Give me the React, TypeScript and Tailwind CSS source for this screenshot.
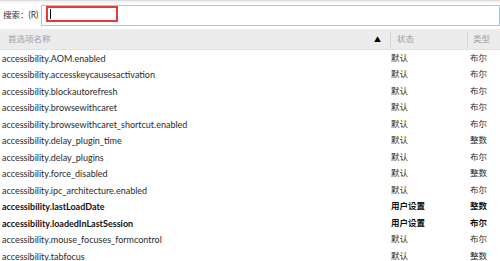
import React from "react";

type Pref = { name: string; status: string; type: string; bold?: boolean };

const rows: Pref[] = [
  { name: "accessibility.AOM.enabled", status: "默认", type: "布尔" },
  { name: "accessibility.accesskeycausesactivation", status: "默认", type: "布尔" },
  { name: "accessibility.blockautorefresh", status: "默认", type: "布尔" },
  { name: "accessibility.browsewithcaret", status: "默认", type: "布尔" },
  { name: "accessibility.browsewithcaret_shortcut.enabled", status: "默认", type: "布尔" },
  { name: "accessibility.delay_plugin_time", status: "默认", type: "整数" },
  { name: "accessibility.delay_plugins", status: "默认", type: "布尔" },
  { name: "accessibility.force_disabled", status: "默认", type: "整数" },
  { name: "accessibility.ipc_architecture.enabled", status: "默认", type: "布尔" },
  { name: "accessibility.lastLoadDate", status: "用户设置", type: "整数", bold: true },
  { name: "accessibility.loadedInLastSession", status: "用户设置", type: "布尔", bold: true },
  { name: "accessibility.mouse_focuses_formcontrol", status: "默认", type: "布尔" },
  { name: "accessibility.tabfocus", status: "默认", type: "整数" },
];

const font = { fontFamily: 'Lato, "Noto Sans CJK SC", sans-serif' };

export default function App() {
  return (
    <div className="w-[500px] h-[261px] overflow-hidden bg-white text-[#2a2a2a]" style={font}>
      <div className="h-[3px] border-t border-[#dcdcdc] bg-[#f3f3f3]" />
      {/* search bar */}
      <div className="flex items-center h-[24px] pl-[3px]">
        <span className="text-[8.5px] text-[#333] w-[38px] shrink-0 whitespace-nowrap">搜索：(R)</span>
        <div className="flex-1 h-[21px] border border-[#8fd0ea] bg-white flex items-center pl-[4px]">
          <div className="w-[72px] h-[16px] border-2 border-[#e5393d] flex items-center pl-[2px] -mt-[2px]">
            <div className="w-px h-[10px] bg-black" />
          </div>
        </div>
      </div>
      {/* header */}
      <div className="mt-[2px] flex items-center h-[21px] bg-[#ececec] text-[8.5px] text-[#a0a0a0] border-b border-[#e0e0e0]">
        <div className="flex-1 pl-[8px] flex items-center justify-between pr-[9px]">
          <span>首选项名称</span>
          <span className="text-[7px] text-black">▲</span>
        </div>
        <div className="w-[77px] h-[15px] border-l border-[#d4d4d4] pl-[6px] flex items-center">状态</div>
        <div className="w-[33px] h-[15px] border-l border-[#d4d4d4] pl-[5px] flex items-center">类型</div>
      </div>
      {/* rows */}
      <div>
        {rows.map((r, i) => (
          <div
            key={i}
            className={`flex items-center h-[16.5px] text-[9px] ${r.bold ? "font-bold text-[#111]" : ""}`}
          >
            <div className="flex-1 pl-[2px] whitespace-nowrap">{r.name}</div>
            <div className="w-[78px] pl-[1px] text-[8.5px] whitespace-nowrap">{r.status}</div>
            <div className="w-[32px] pl-[2px] text-[8.5px]">{r.type}</div>
          </div>
        ))}
      </div>
    </div>
  );
}
